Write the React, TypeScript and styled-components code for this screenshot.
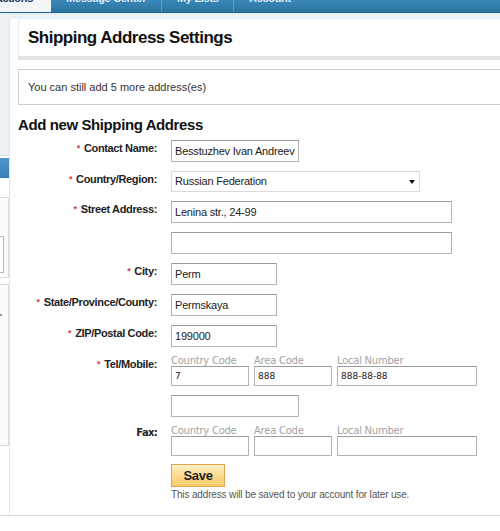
import React from "react";
import styled, { createGlobalStyle } from "styled-components";

const GlobalStyle = createGlobalStyle`
    html, body {
        margin: 0;
        padding: 0;
        background: #ffffff;
    }
    body {
        font-family: "Liberation Sans", Arial, sans-serif;
        color: #222;
        overflow: hidden;
    }
`;

export default function App() {
    return (
        <Page>
            <GlobalStyle />
            <TabBar>
                <Tab $active $width={51}>Transactions</Tab>
                <Tab $width={111}>Message Center</Tab>
                <Tab $width={72}>My Lists</Tab>
                <Tab $width={90} $last>Account</Tab>
            </TabBar>
            <Body>
                <Sidebar>
                    <SideTop />
                    <SideActive />
                    <SideBox $top={19} $height={81}>
                        <SideInner />
                    </SideBox>
                    <SideBox $top={6} $height={162}>
                        <SideMark />
                    </SideBox>
                </Sidebar>
                <Main>
                    <TitleBar>Shipping Address Settings</TitleBar>
                    <TitleRule />
                    <Notice>You can still add 5 more address(es)</Notice>
                    <Heading>Add new Shipping Address</Heading>
                    <Form>
                        <Label $required>Contact Name:</Label>
                        <TextInput $width={128} defaultValue="Besstuzhev Ivan Andreevich" readOnly />

                        <Label $required>Country/Region:</Label>
                        <SelectWrap>
                            <Select defaultValue="ru">
                                <option value="ru">Russian Federation</option>
                            </Select>
                            <Caret />
                        </SelectWrap>

                        <Label $required>Street Address:</Label>
                        <TextInput $width={281} defaultValue="Lenina str., 24-99" readOnly />

                        <Label />
                        <TextInput $width={281} readOnly />

                        <Label $required>City:</Label>
                        <TextInput $width={106} defaultValue="Perm" readOnly />

                        <Label $required>State/Province/County:</Label>
                        <TextInput $width={106} defaultValue="Permskaya" readOnly />

                        <Label $required>ZIP/Postal Code:</Label>
                        <TextInput $width={106} defaultValue="199000" readOnly />

                        <Label $required>Tel/Mobile:</Label>
                        <PhoneGroup>
                            <PhonePart $width={78}>
                                <SubLabel>Country Code</SubLabel>
                                <PhoneInput defaultValue="7" readOnly />
                            </PhonePart>
                            <PhonePart $width={78}>
                                <SubLabel>Area Code</SubLabel>
                                <PhoneInput defaultValue="888" readOnly />
                            </PhonePart>
                            <PhonePart $width={140}>
                                <SubLabel>Local Number</SubLabel>
                                <PhoneInput defaultValue="888-88-88" readOnly />
                            </PhonePart>
                        </PhoneGroup>

                        <Label />
                        <TextInput $width={128} readOnly />

                        <FaxLabel>Fax:</FaxLabel>
                        <PhoneGroup>
                            <PhonePart $width={78}>
                                <SubLabel>Country Code</SubLabel>
                                <PhoneInput readOnly />
                            </PhonePart>
                            <PhonePart $width={78}>
                                <SubLabel>Area Code</SubLabel>
                                <PhoneInput readOnly />
                            </PhonePart>
                            <PhonePart $width={140}>
                                <SubLabel>Local Number</SubLabel>
                                <PhoneInput readOnly />
                            </PhonePart>
                        </PhoneGroup>

                        <Label />
                        <Actions>
                            <SaveButton type="button">Save</SaveButton>
                            <Hint>This address will be saved to your account for later use.</Hint>
                        </Actions>
                    </Form>
                </Main>
            </Body>
            <Footer />
        </Page>
    );
}

const Page = styled.div`
    width: 500px;
    height: 531px;
    overflow: hidden;
    display: flex;
    flex-direction: column;
`;

const TabBar = styled.div`
    display: flex;
    height: 13px;
    overflow: hidden;
    background: linear-gradient(#3a88b8, #2b73a0);
    border-bottom: 1px solid #1f6390;
    box-sizing: border-box;
`;

const Tab = styled.div<{ $active?: boolean; $width: number; $last?: boolean }>`
    flex: 0 0 ${(p) => p.$width}px;
    display: flex;
    align-items: flex-end;
    justify-content: ${(p) => (p.$active ? "flex-end" : "flex-start")};
    overflow: hidden;
    box-sizing: border-box;
    padding: ${(p) => (p.$active ? "0 18px 8px 0" : "0 0 8px 15px")};
    line-height: 12px;
    font-size: 11px;
    font-weight: bold;
    letter-spacing: -0.3px;
    white-space: nowrap;
    color: ${(p) => (p.$active ? "#1b3350" : "#dcebf5")};
    background: ${(p) => (p.$active ? "#f1f5f8" : "transparent")};
    border-right: ${(p) => (p.$active || p.$last ? "none" : "1px solid #5a9dc6")};
`;

const Body = styled.div`
    display: flex;
    height: 503px;
    background: #e9f1f6;
`;

const Sidebar = styled.div`
    flex: 0 0 9px;
    display: flex;
    flex-direction: column;
    background: #ffffff;
`;

const SideTop = styled.div`
    height: 142px;
    background: #eef2f5;
    border-bottom: 1px solid #d6dde3;
`;

const SideActive = styled.div`
    height: 19px;
    margin-top: 2px;
    background: linear-gradient(#4d95c9, #3a84bc);
    border-bottom: 1px solid #2f74a8;
`;

const SideBox = styled.div<{ $top: number; $height: number }>`
    position: relative;
    margin-top: ${(p) => p.$top}px;
    height: ${(p) => p.$height}px;
    box-sizing: border-box;
    border: 1px solid #dcdcdc;
    border-left: none;
    background: #fbfbfb;
`;

const SideInner = styled.div`
    position: absolute;
    top: 38px;
    left: 0;
    width: 3px;
    height: 35px;
    border: 1px solid #b9b9b9;
    border-left: none;
    background: #fff;
`;

const SideMark = styled.div`
    position: absolute;
    top: 29px;
    left: 0;
    width: 2px;
    height: 2px;
    background: #999;
`;

const Main = styled.div`
    flex: 1;
    margin-top: 6px;
    padding: 1px 0 0 8px;
    background: #ffffff;
    border-left: 1px solid #e1e6ea;
    border-top-left-radius: 3px;
    display: flex;
    flex-direction: column;
`;

const TitleBar = styled.div`
    height: 36px;
    display: flex;
    align-items: center;
    padding-left: 9px;
    border-left: 1px solid #ececec;
    font-size: 17px;
    font-weight: bold;
    letter-spacing: -0.5px;
    color: #111;
`;

const TitleRule = styled.div`
    height: 4px;
    background: #e3e3e3;
`;

const Notice = styled.div`
    margin-top: 9px;
    height: 36px;
    box-sizing: border-box;
    display: flex;
    align-items: center;
    padding-left: 9px;
    border: 1px solid #cfcfcf;
    border-right: none;
    font-size: 11px;
    color: #333;
`;

const Heading = styled.h2`
    margin: 11px 0 0;
    font-size: 15px;
    line-height: 18px;
    font-weight: bold;
    letter-spacing: -0.4px;
    color: #111;
`;

const Form = styled.div`
    margin-top: 6px;
    display: grid;
    grid-template-columns: 139px 1fr;
    column-gap: 14px;
    row-gap: 9px;
    align-items: start;
`;

const Label = styled.div<{ $required?: boolean }>`
    display: flex;
    justify-content: flex-end;
    align-items: center;
    gap: 4px;
    line-height: 16px;
    font-size: 11px;
    font-weight: bold;
    letter-spacing: -0.35px;
    color: #222;
    white-space: nowrap;

    &::before {
        content: ${(p) => (p.$required ? '"*"' : "none")};
        color: #d23f4a;
        font-size: 9px;
        font-weight: bold;
    }
`;

const FaxLabel = styled.div`
    text-align: right;
    line-height: 14px;
    font-family: "DejaVu Sans", Verdana, sans-serif;
    font-size: 10px;
    font-weight: bold;
    letter-spacing: -0.7px;
    color: #222;
`;

const TextInput = styled.input<{ $width: number }>`
    width: ${(p) => p.$width}px;
    height: 22px;
    box-sizing: border-box;
    margin: 0;
    padding: 0 3px;
    border: 1px solid #b4b4b4;
    border-top-color: #9c9c9c;
    border-radius: 0;
    background: #fff;
    font-family: "Liberation Sans", Arial, sans-serif;
    font-size: 11px;
    letter-spacing: -0.2px;
    color: #222;
    outline: none;
`;

const SelectWrap = styled.div`
    position: relative;
    width: 249px;
    height: 21px;
`;

const Select = styled.select`
    appearance: none;
    width: 100%;
    height: 100%;
    box-sizing: border-box;
    margin: 0;
    padding: 0 3px;
    border: 1px solid #dadada;
    border-radius: 0;
    background: #fff;
    font-family: "Liberation Sans", Arial, sans-serif;
    font-size: 11px;
    letter-spacing: -0.2px;
    color: #222;
    outline: none;
`;

const Caret = styled.span`
    position: absolute;
    right: 5px;
    top: 9px;
    width: 0;
    height: 0;
    border-left: 3.5px solid transparent;
    border-right: 3.5px solid transparent;
    border-top: 4px solid #111;
    pointer-events: none;
`;

const PhoneGroup = styled.div`
    display: flex;
    gap: 5px;
`;

const PhonePart = styled.div<{ $width: number }>`
    width: ${(p) => p.$width}px;
    display: flex;
    flex-direction: column;
`;

const SubLabel = styled.div`
    height: 10px;
    line-height: 10px;
    font-family: "DejaVu Sans", Verdana, sans-serif;
    font-size: 10px;
    letter-spacing: -0.25px;
    color: #a3a3a3;
    white-space: nowrap;
`;

const PhoneInput = styled.input`
    width: 100%;
    height: 20px;
    box-sizing: border-box;
    margin: 0;
    padding: 0 3px;
    border: 1px solid #b4b4b4;
    border-top-color: #9c9c9c;
    border-radius: 0;
    background: #fff;
    font-family: "DejaVu Sans", Verdana, sans-serif;
    font-size: 9px;
    color: #222;
    outline: none;
`;

const Actions = styled.div`
    margin-top: -1px;
    display: flex;
    flex-direction: column;
    align-items: flex-start;
`;

const SaveButton = styled.button`
    width: 54px;
    height: 23px;
    margin: 0;
    padding: 0;
    border: 1px solid #e3a34c;
    border-radius: 0;
    background: linear-gradient(#fff1c6, #fbd98c 55%, #f7c96f);
    font-family: "Liberation Sans", Arial, sans-serif;
    font-size: 13px;
    font-weight: bold;
    letter-spacing: -0.3px;
    color: #222;
    cursor: pointer;
`;

const Hint = styled.div`
    margin-top: 1px;
    line-height: 13px;
    font-size: 10px;
    letter-spacing: -0.15px;
    color: #555;
    white-space: nowrap;
`;

const Footer = styled.div`
    height: 15px;
    border-top: 1px solid #dcdcdc;
    background: #fff;
`;
